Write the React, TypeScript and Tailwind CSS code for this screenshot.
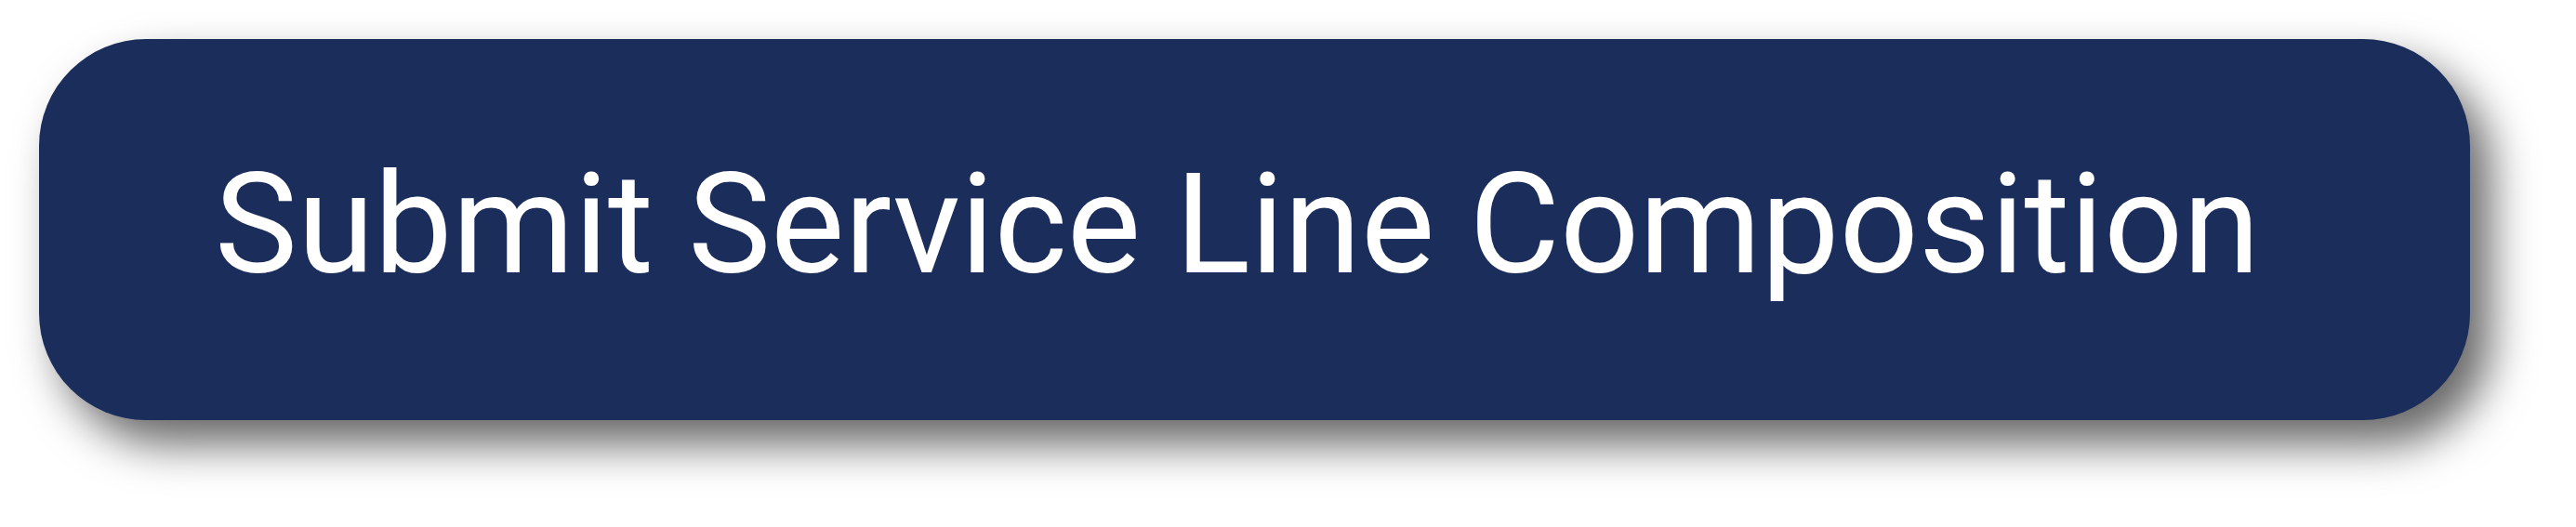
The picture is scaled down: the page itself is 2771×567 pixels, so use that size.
export default function App() {
  return (
    <div className="w-[2771px] h-[567px] bg-white pt-[42px] pl-[42px]">
      <button
        type="button"
        className="flex items-center w-[2615px] h-[410px] rounded-[115px] bg-[#1b2d5b] pl-[189px] pb-[8px] text-white text-[149.7px] leading-none shadow-[22px_26px_48px_rgba(0,0,0,0.6)]"
        style={{ fontFamily: 'Roboto, "Liberation Sans", sans-serif' }}
      >
        Submit Service Line Composition
      </button>
    </div>
  )
}
